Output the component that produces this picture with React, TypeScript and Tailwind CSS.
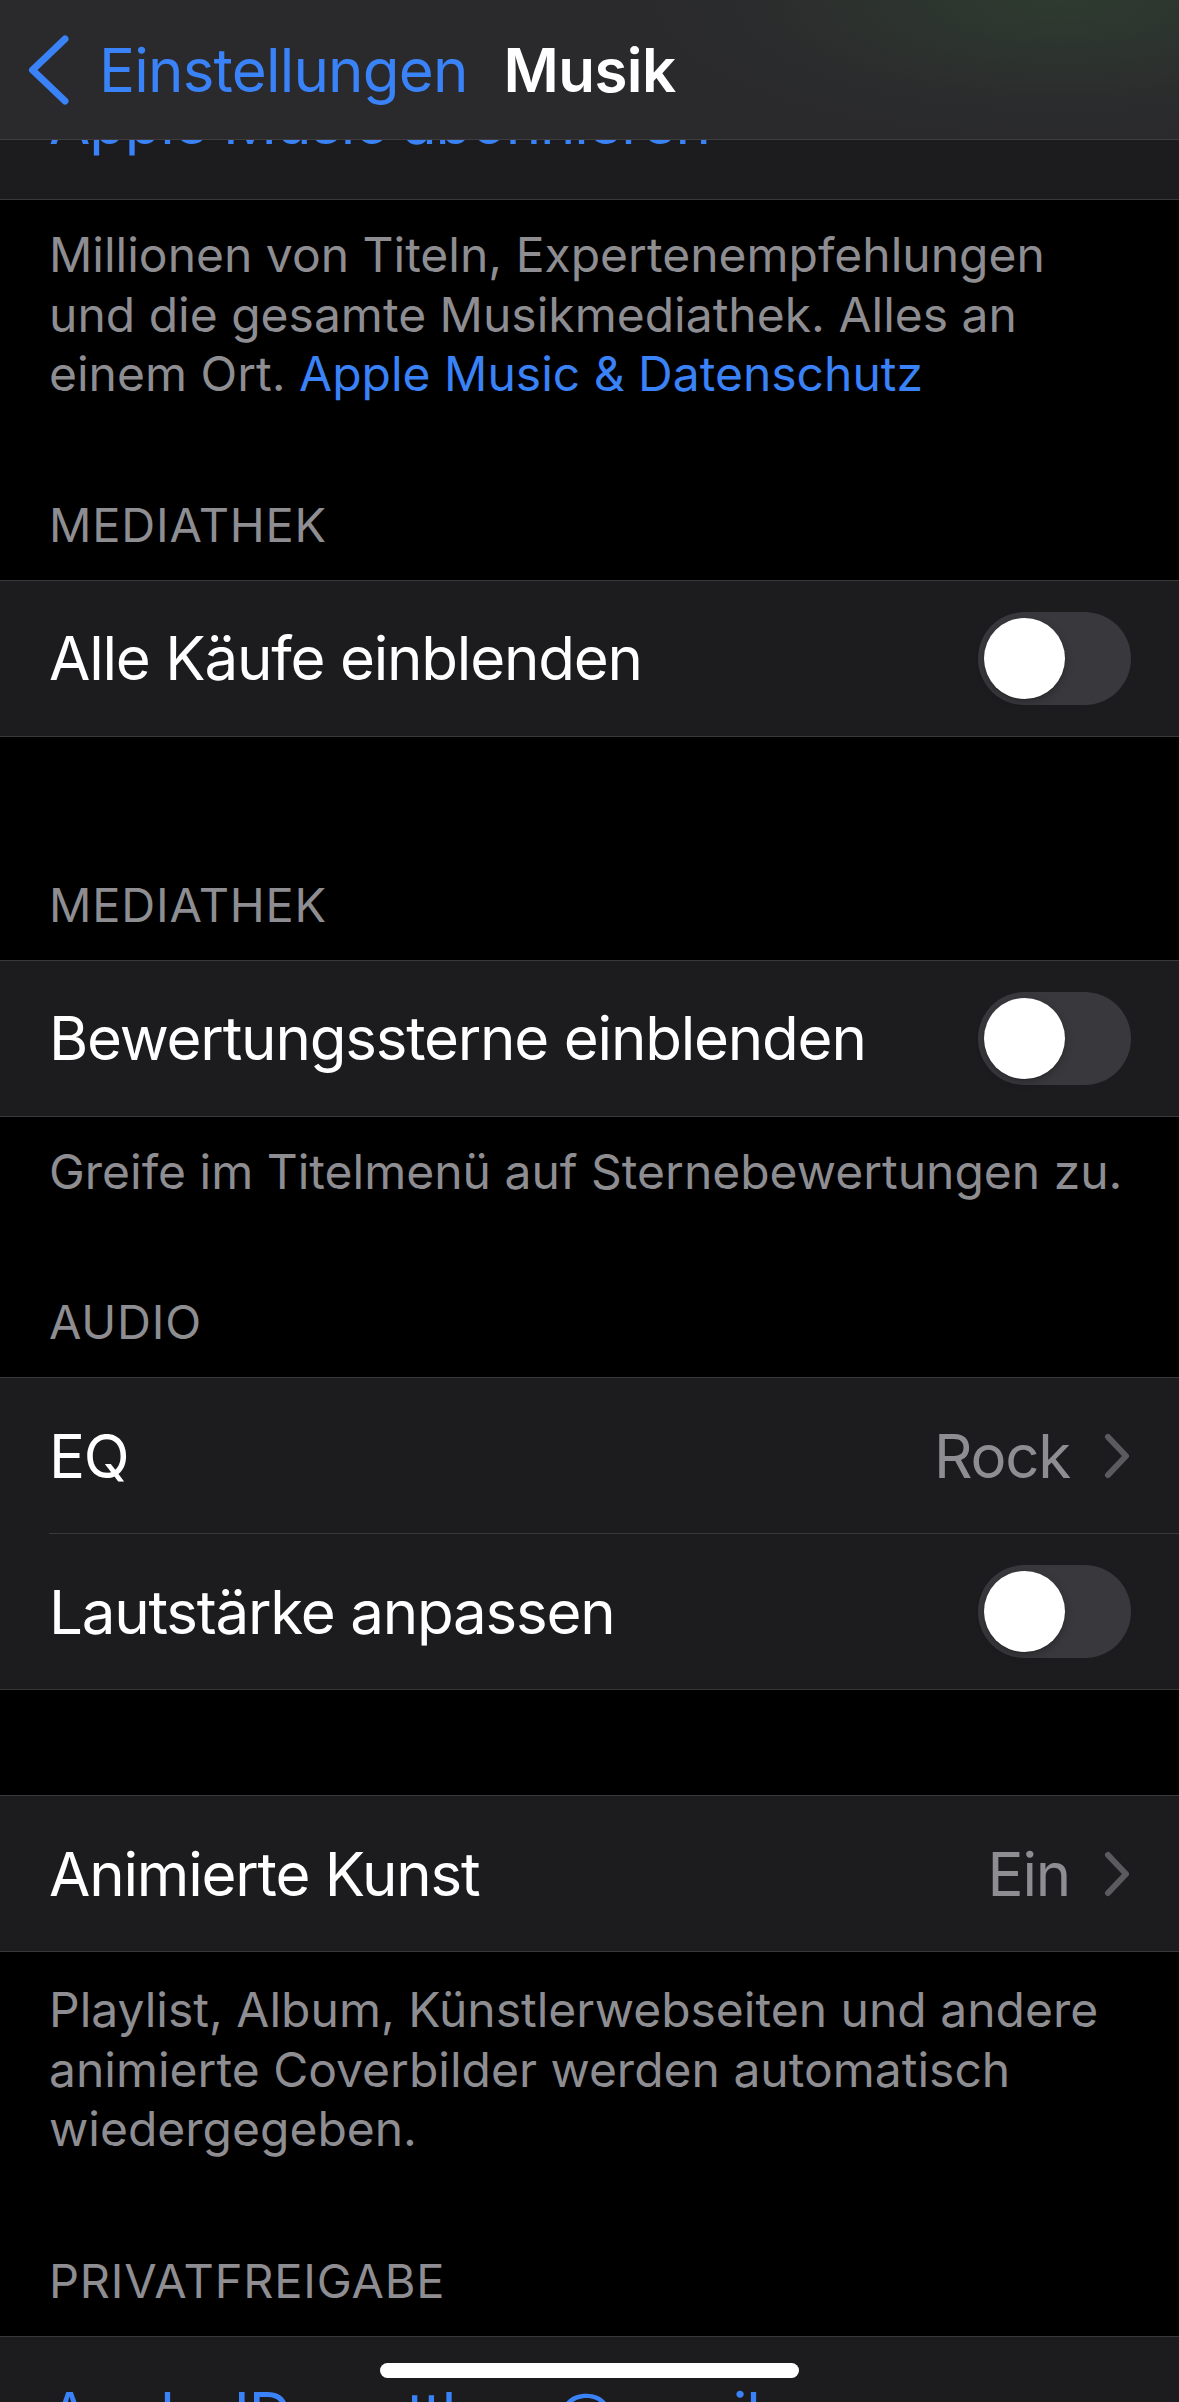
import React from "react";

function Group({ className = "", children }: { className?: string; children: React.ReactNode }) {
  return <div className={"border-y border-[#38383a] bg-[#1c1c1e] " + className}>{children}</div>;
}

function Row({ children }: { children: React.ReactNode }) {
  return (
    <div className="h-[155px] flex items-center justify-between pl-[49px] pr-[48px] text-[60px] leading-[72px] tracking-[-1.2px] text-white">
      {children}
    </div>
  );
}

function Toggle() {
  return (
    <div className="w-[153px] h-[93px] rounded-full bg-[#39393d] p-[6px] flex items-center">
      <div className="w-[81px] h-[81px] rounded-full bg-white shadow-[0_3px_8px_rgba(0,0,0,0.25),0_1px_1px_rgba(0,0,0,0.16)]" />
    </div>
  );
}

function Chevron() {
  return (
    <svg width="30" height="48" viewBox="0 0 30 48" className="ml-[32px] -mr-[1px]">
      <path d="M6 5 L24 24 L6 43" fill="none" stroke="#5a5a5f" strokeWidth="6" strokeLinecap="round" strokeLinejoin="round" />
    </svg>
  );
}

function Header({ pt, children }: { pt: string; children: React.ReactNode }) {
  return (
    <div className={"px-[49px] pb-[27px] text-[47px] leading-[56px] tracking-[0.8px] text-[#8d8d92] " + pt}>{children}</div>
  );
}

export default function App() {
  return (
    <div className="relative w-[1179px] h-[2402px] overflow-hidden bg-black font-['Inter',sans-serif] antialiased">
      <div className="flex flex-col">
        <Group className="mt-[43px]">
          <div className="h-[155px] flex items-center px-[49px] text-[60px] leading-[72px] tracking-[-1.2px] text-[#3a82f7]">
            Apple Music abonnieren
          </div>
        </Group>

        <div className="px-[49px] pt-[25px] text-[48px] leading-[59.5px] text-[#8d8d92] whitespace-nowrap">
          Millionen von Titeln, Expertenempfehlungen
          <br />
          und die gesamte Musikmediathek. Alles an
          <br />
          einem Ort. <span className="text-[#3a82f7]">Apple Music &amp; Datenschutz</span>
        </div>

        <Header pt="pt-[93px]">MEDIATHEK</Header>
        <Group>
          <Row>
            <span>Alle Käufe einblenden</span>
            <Toggle />
          </Row>
        </Group>

        <Header pt="pt-[140px]">MEDIATHEK</Header>
        <Group>
          <Row>
            <span>Bewertungssterne einblenden</span>
            <Toggle />
          </Row>
        </Group>

        <div className="px-[49px] pt-[25px] text-[48px] leading-[59.5px] text-[#8d8d92] whitespace-nowrap">
          Greife im Titelmenü auf Sternebewertungen zu.
        </div>

        <Header pt="pt-[93px]">AUDIO</Header>
        <Group>
          <Row>
            <span>EQ</span>
            <div className="flex items-center">
              <span className="text-[#8d8d92]">Rock</span>
              <Chevron />
            </div>
          </Row>
          <div className="ml-[49px] h-px bg-[#38383a]" />
          <Row>
            <span>Lautstärke anpassen</span>
            <Toggle />
          </Row>
        </Group>

        <Group className="mt-[105px]">
          <Row>
            <span>Animierte Kunst</span>
            <div className="flex items-center">
              <span className="text-[#8d8d92]">Ein</span>
              <Chevron />
            </div>
          </Row>
        </Group>

        <div className="px-[49px] pt-[28px] text-[48px] leading-[59.5px] text-[#8d8d92] whitespace-nowrap">
          Playlist, Album, Künstlerwebseiten und andere
          <br />
          animierte Coverbilder werden automatisch
          <br />
          wiedergegeben.
        </div>

        <Header pt="pt-[94px]">PRIVATFREIGABE</Header>
        <Group>
          <div className="h-[155px] flex items-center px-[49px] text-[60px] leading-[72px] tracking-[-1.2px] text-[#3a82f7]">
            Apple-ID: matthew@gmail.com
          </div>
        </Group>
      </div>

      {/* Navigation bar */}
      <div className="absolute inset-x-0 top-0 h-[140px] border-b border-[#3d3d40] bg-[radial-gradient(ellipse_35%_100%_at_90%_0%,#2e3b30_0%,#2b2c2d_75%,#2a2a2c_100%)]">
        <div className="h-[139px] grid grid-cols-[1fr_auto_1fr] items-center">
          <div className="flex items-center">
            <svg width="44" height="72" viewBox="0 0 44 72" className="ml-[25px]">
              <path d="M40 5 L7.5 36 L40 67" fill="none" stroke="#3a82f7" strokeWidth="7" strokeLinecap="round" strokeLinejoin="round" />
            </svg>
            <span className="ml-[30px] text-[60px] leading-[72px] tracking-[-0.8px] text-[#3a82f7]">Einstellungen</span>
          </div>
          <span className="text-[60px] leading-[72px] font-semibold tracking-[-0.6px] text-white">Musik</span>
          <div />
        </div>
      </div>

      {/* Home indicator */}
      <div className="absolute left-[380px] top-[2363px] w-[419px] h-[15px] rounded-full bg-white" />
    </div>
  );
}
